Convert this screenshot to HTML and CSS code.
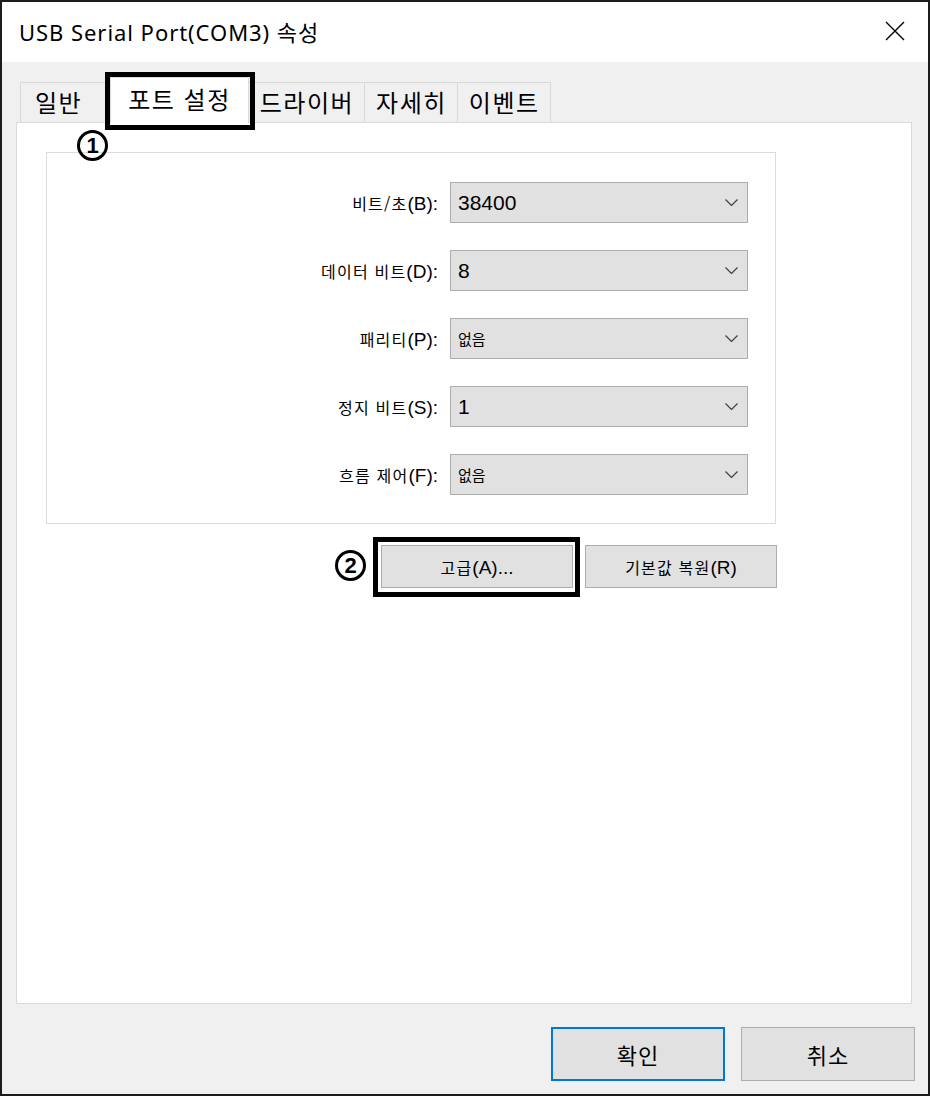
FILE: index.html
```html
<!DOCTYPE html>
<html lang="ko">
<head>
  <meta charset="UTF-8">
  <meta name="viewport" content="width=device-width, initial-scale=1.0">
  <title>USB Serial Port(COM3) 속성</title>
  <link rel="stylesheet" href="styles.css">
</head>
<body>
  <div class="window">
    <header class="titlebar">
      <span class="title">USB Serial Port(COM3) 속성</span>
      <svg class="close" width="20" height="20" viewBox="0 0 20 20">
        <path d="M1 1 L19 19 M19 1 L1 19" stroke="#000" stroke-width="1.4" fill="none"/>
      </svg>
    </header>

    <div class="content">
      <div class="tabs">
        <div class="tab tab-first">일반</div>
        <div class="tab tab-active">포트 설정</div>
        <div class="tab">드라이버</div>
        <div class="tab">자세히</div>
        <div class="tab">이벤트</div>
        <!-- annotation -->
        <div class="mark mark-tab"></div>
        <span class="num num-tab">1</span>
      </div>

      <div class="panel">
        <div class="group">
          <label class="field-label"><span class="ko">비트/초</span>(B):</label>
          <div class="combo">
            <span class="value">38400</span>
            <svg class="chev" width="13" height="7" viewBox="0 0 13 7"><polyline points="0.5,0.5 6.5,6.5 12.5,0.5" fill="none" stroke="#404040" stroke-width="1.2"/></svg>
          </div>

          <label class="field-label"><span class="ko">데이터 비트</span>(D):</label>
          <div class="combo">
            <span class="value">8</span>
            <svg class="chev" width="13" height="7" viewBox="0 0 13 7"><polyline points="0.5,0.5 6.5,6.5 12.5,0.5" fill="none" stroke="#404040" stroke-width="1.2"/></svg>
          </div>

          <label class="field-label"><span class="ko">패리티</span>(P):</label>
          <div class="combo">
            <span class="value value-ko">없음</span>
            <svg class="chev" width="13" height="7" viewBox="0 0 13 7"><polyline points="0.5,0.5 6.5,6.5 12.5,0.5" fill="none" stroke="#404040" stroke-width="1.2"/></svg>
          </div>

          <label class="field-label"><span class="ko">정지 비트</span>(S):</label>
          <div class="combo">
            <span class="value">1</span>
            <svg class="chev" width="13" height="7" viewBox="0 0 13 7"><polyline points="0.5,0.5 6.5,6.5 12.5,0.5" fill="none" stroke="#404040" stroke-width="1.2"/></svg>
          </div>

          <label class="field-label"><span class="ko">흐름 제어</span>(F):</label>
          <div class="combo">
            <span class="value value-ko">없음</span>
            <svg class="chev" width="13" height="7" viewBox="0 0 13 7"><polyline points="0.5,0.5 6.5,6.5 12.5,0.5" fill="none" stroke="#404040" stroke-width="1.2"/></svg>
          </div>
        </div>

        <div class="actions">
          <div class="marked">
            <span class="num num-btn">2</span>
            <button class="btn"><span class="ko">고급</span>(A)...</button>
            <div class="mark mark-btn"></div>
          </div>
          <button class="btn"><span class="ko">기본값 복원</span>(R)</button>
        </div>
      </div>

      <div class="footer">
        <button class="btn btn-lg btn-default">확인</button>
        <button class="btn btn-lg">취소</button>
      </div>
    </div>
  </div>
</body>
</html>
```

FILE: styles.css
```css
* {
  box-sizing: border-box;
}

body {
  margin: 0;
  font-family: "Liberation Sans", "Noto Sans CJK KR", sans-serif;
  color: #000;
}

.window {
  width: 930px;
  height: 1096px;
  border: 2px solid #1c1c1c;
  background-color: #f0f0f0;
  display: flex;
  flex-direction: column;
}

.titlebar {
  height: 60px;
  background-color: #fff;
  display: flex;
  align-items: center;
  justify-content: space-between;
  padding: 0 23px 2px 17px;
}

.title {
  font-family: "Noto Sans", "Noto Sans CJK KR", sans-serif;
  font-size: 22px;
  letter-spacing: 0.95px;
}

.content {
  flex: 1;
  display: flex;
  flex-direction: column;
  padding: 20px 16px 13px 14px;
}

/* tabs */
.tabs {
  position: relative;
  display: flex;
  align-items: flex-end;
  height: 40px;
  padding-left: 4px;
  z-index: 2;
}

.tab {
  height: 40px;
  padding: 0 10px 0 11px;
  margin-left: -1px;
  border: 1px solid #d9d9d9;
  border-bottom: none;
  font-family: "Noto Sans CJK KR", sans-serif;
  font-size: 24px;
  letter-spacing: 1.5px;
  line-height: 38px;
  background-color: #f0f0f0;
}

.tab-first {
  margin-left: 0;
  padding: 0 28px 0 14px;
}

.tab-active {
  height: 46px;
  margin-bottom: -1px;
  padding: 0 17px;
  background-color: #fff;
  line-height: 42px;
}

.panel {
  flex: 1;
  background-color: #fff;
  border: 1px solid #d9d9d9;
  padding: 29px 0 0 29px;
  position: relative;
  z-index: 1;
}

/* group box */
.group {
  width: 730px;
  border: 1px solid #dcdcdc;
  display: grid;
  grid-template-columns: 1fr 298px;
  column-gap: 12px;
  row-gap: 27px;
  padding: 29px 27px 28px 0;
}

.field-label {
  justify-self: end;
  align-self: center;
  font-size: 19px;
}

.ko {
  font-family: "Noto Sans CJK KR", sans-serif;
  font-size: 16px;
  letter-spacing: 1.2px;
}

.combo {
  height: 41px;
  background-color: #e1e1e1;
  border: 1px solid #adadad;
  display: flex;
  align-items: center;
  justify-content: space-between;
  padding: 0 9px 0 7px;
}

.value {
  font-size: 21px;
}

.value-ko {
  font-family: "Noto Sans CJK KR", sans-serif;
  font-size: 15px;
}

/* buttons */
.actions {
  width: 731px;
  margin-top: 21px;
  display: flex;
  justify-content: flex-end;
  gap: 12px;
}

.btn {
  width: 192px;
  height: 43px;
  background-color: #e1e1e1;
  border: 1px solid #adadad;
  font-family: "Liberation Sans", "Noto Sans CJK KR", sans-serif;
  font-size: 19px;
  color: #000;
  padding: 0;
}

.footer {
  display: flex;
  justify-content: flex-end;
  gap: 16px;
  margin-top: 23px;
  margin-right: -3px;
}

.btn-lg {
  width: 174px;
  height: 54px;
  font-family: "Noto Sans CJK KR", sans-serif;
  font-size: 22px;
  letter-spacing: 1px;
}

.btn-default {
  border: 2px solid #0078d7;
}

/* annotations */
.marked {
  position: relative;
}

.mark {
  position: absolute;
  border: 5px solid #000;
  pointer-events: none;
}

.mark-tab {
  left: 89px;
  top: -10px;
  width: 150px;
  height: 58px;
}

.mark-btn {
  left: -8px;
  top: -8px;
  width: 207px;
  height: 60px;
}

.num {
  position: absolute;
  width: 31px;
  height: 31px;
  border: 3px solid #000;
  border-radius: 50%;
  display: flex;
  align-items: center;
  justify-content: center;
  font-family: "Liberation Sans", sans-serif;
  font-weight: bold;
  font-size: 22px;
  background-color: transparent;
}

.num-tab {
  left: 61px;
  top: 48px;
}

.num-btn {
  left: -46px;
  top: 5px;
}
```
